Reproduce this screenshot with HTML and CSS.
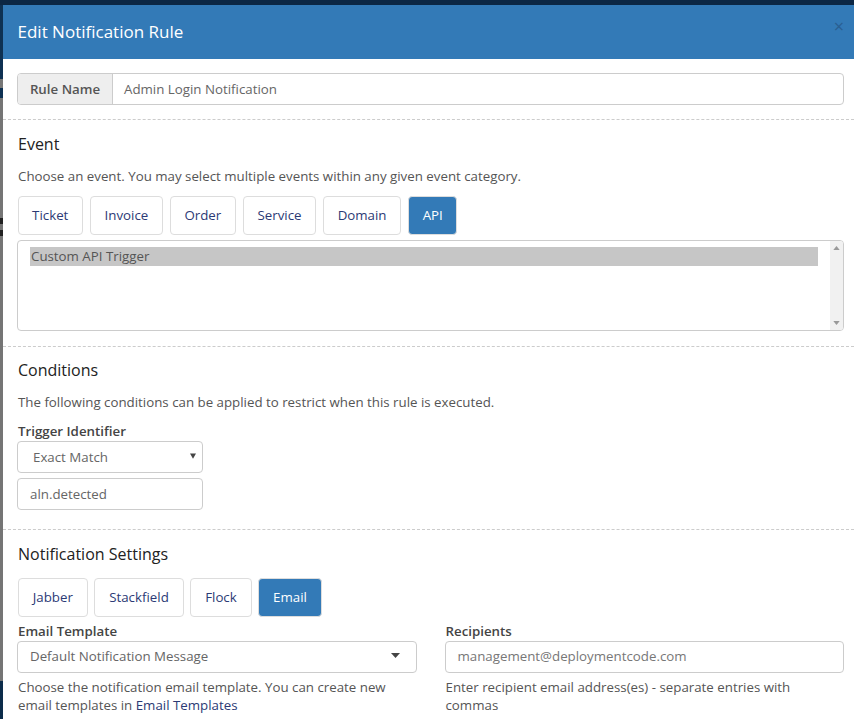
FILE: index.html
```html
<!DOCTYPE html>
<html lang="en">
<head>
<meta charset="utf-8">
<title>Edit Notification Rule</title>
<link rel="stylesheet" href="styles.css">
</head>
<body>
<div class="modal">
  <header class="modal-head">
    <h1>Edit Notification Rule</h1>
    <span class="close">×</span>
  </header>
  <div class="modal-body">
    <div class="input-group">
      <span class="addon">Rule Name</span>
      <span class="field">Admin Login Notification</span>
    </div>
    <hr class="sep sep-first">
    <h2>Event</h2>
    <p class="desc">Choose an event. You may select multiple events within any given event category.</p>
    <div class="tabs">
      <span class="tab">Ticket</span>
      <span class="tab">Invoice</span>
      <span class="tab">Order</span>
      <span class="tab">Service</span>
      <span class="tab">Domain</span>
      <span class="tab active">API</span>
    </div>
    <div class="listbox">
      <div class="list-items"><div class="option">Custom API Trigger</div></div>
      <div class="scrollbar">
        <svg viewBox="0 0 8 5" class="arrow"><path d="M4 0 8 5H0z"/></svg>
        <svg viewBox="0 0 8 5" class="arrow"><path d="M0 0H8L4 5z"/></svg>
      </div>
    </div>
    <hr class="sep sep-second">
    <h2>Conditions</h2>
    <p class="desc">The following conditions can be applied to restrict when this rule is executed.</p>
    <label class="label">Trigger Identifier</label>
    <div class="control narrow select-native">
      <span>Exact Match</span>
      <svg viewBox="0 0 8 7" class="caret-small"><path d="M0 0H8L4 7z"/></svg>
    </div>
    <div class="control narrow identifier">aln.detected</div>
    <hr class="sep sep-third">
    <h2>Notification Settings</h2>
    <div class="tabs tabs-notify">
      <span class="tab">Jabber</span>
      <span class="tab">Stackfield</span>
      <span class="tab">Flock</span>
      <span class="tab active">Email</span>
    </div>
    <div class="columns">
      <div class="column">
        <label class="label">Email Template</label>
        <div class="control select-wide">
          <span>Default Notification Message</span>
          <svg viewBox="0 0 9 5" class="caret-wide"><path d="M0 0H9L4.5 5z"/></svg>
        </div>
        <p class="help">Choose the notification email template. You can create new email templates in <a href="#">Email Templates</a></p>
      </div>
      <div class="column">
        <label class="label">Recipients</label>
        <div class="control control-light">management@deploymentcode.com</div>
        <p class="help">Enter recipient email address(es) - separate entries with commas</p>
      </div>
    </div>
  </div>
</div>
</body>
</html>
```
FILE: styles.css
```css
* { box-sizing: border-box; }
html, body { margin: 0; height: 719px; overflow: hidden; }
body {
  background:
    linear-gradient(#0c2744 0 5px, transparent 5px),
    linear-gradient(#0e3152 0 79px, #777 79px 88px, #0e3152 88px 98px, #757575 98px 218px, #222 218px 224px, #757575 224px 230px, #222 230px 236px, #757575 236px 681px, #0c2c4a 681px);
  padding: 5px 0 0 3px;
  font-family: "Open Sans", sans-serif;
  font-size: 13.3px;
  line-height: 19px;
  color: #555;
}
.modal { background: #fff; height: 714px; overflow: hidden; }
.modal-head {
  height: 54px;
  background: #337ab7;
  display: flex;
  align-items: center;
  justify-content: space-between;
  padding: 0 10px 2px 14.5px;
}
.modal-head h1 { margin: 0; font-size: 17px; font-weight: 400; color: #fff; }
.close { color: #2a5f91; font-size: 18px; line-height: 18px; margin-top: -10px; }
.modal-body { padding: 14px 10px 0 14px; }
.input-group {
  display: flex;
  height: 32px;
  border: 1px solid #ccc;
  border-radius: 4px;
}
.addon {
  width: 95px;
  background: #eee;
  border-right: 1px solid #ccc;
  border-radius: 3px 0 0 3px;
  font-weight: 600;
  display: flex;
  align-items: center;
  justify-content: center;
}
.field { padding: 6px 11px; flex: 1; color: #666; }
.sep { border: 0; border-top: 1px dashed #ccc; margin-left: -14px; margin-right: -10px; }
.sep-first { margin-top: 14px; margin-bottom: 14px; }
.sep-second { margin-top: 15px; margin-bottom: 13px; }
.sep-third { margin-top: 19px; margin-bottom: 14px; }
h2 { margin: 0; padding-left: 1px; font-size: 16px; line-height: 21px; font-weight: 400; color: #222; }
.desc { margin: 12px 0 10px; padding-left: 1px; }
.tabs { display: flex; gap: 7px; padding-left: 0.5px; }
.tab {
  height: 39px;
  padding: 0 13.6px;
  border: 1px solid #ddd;
  border-radius: 4px;
  color: #2b3a75;
  display: flex;
  align-items: center;
  background: #fff;
}
.tab.active { background: #337ab7; color: #fff; border-color: #ddd; }
.listbox {
  display: flex;
  margin-top: 5px;
  height: 91px;
  border: 1px solid #ccc;
  border-radius: 4px;
  overflow: hidden;
}
.list-items { flex: 1; padding: 6px 12px 0 12px; }
.option { background: #c6c6c6; height: 19px; line-height: 19px; padding-left: 1px; }
.scrollbar {
  width: 13px;
  background: #f1f1f1;
  display: flex;
  flex-direction: column;
  justify-content: space-between;
  align-items: center;
  padding: 5px 0;
}
.arrow { width: 7px; height: 4px; fill: #999; display: block; }
.label { display: block; padding-left: 1px; font-weight: 600; color: #444; line-height: 19px; }
.control {
  height: 32px;
  border: 1px solid #ccc;
  border-radius: 4px;
  padding: 0 12px;
  display: flex;
  align-items: center;
  justify-content: space-between;
  color: #666;
}
.control-light { color: #777; }
.narrow { width: 186px; }
.select-native { padding: 0 6px 0 15px; }
.identifier { margin-top: 5px; }
.caret-small { width: 6px; height: 6px; fill: #444; margin-top: -2px; }
.caret-wide { width: 9px; height: 5px; fill: #444; margin-right: 4px; margin-top: -2px; }
.tabs-notify { gap: 6px; margin-top: 12.5px; }
.tabs-notify .tab { padding: 0 14.2px; }
.columns { display: grid; grid-template-columns: 1fr 1fr; column-gap: 28px; margin-top: 5px; }
.help { margin: 5px 0 0; padding-left: 1px; line-height: 18.5px; }
.help a { color: #2b3a75; text-decoration: none; }
```
